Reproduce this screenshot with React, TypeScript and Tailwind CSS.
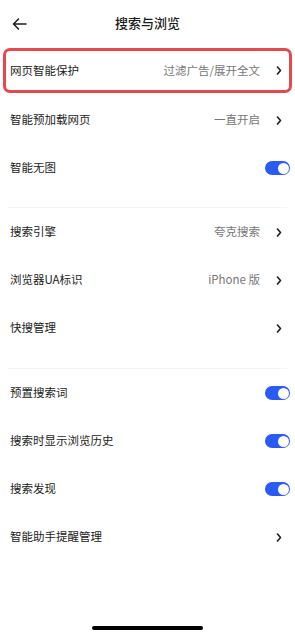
import React from "react";

const font = { fontFamily: '"Noto Sans CJK SC", "Noto Sans", sans-serif' };

function Chevron() {
  return (
    <svg width="6" height="9" viewBox="0 0 6 9" fill="none" className="shrink-0">
      <path d="M1.5 1 L4.5 4.5 L1.5 8" stroke="#1c1c1c" strokeWidth="1.6" strokeLinecap="round" strokeLinejoin="round" />
    </svg>
  );
}

function Toggle() {
  return (
    <div className="w-[25px] h-[14px] rounded-full bg-[#2a5bf5] flex items-center justify-end pr-[1.5px] -mr-[8px]">
      <div className="w-[11px] h-[11px] rounded-full bg-white" />
    </div>
  );
}

function Row({ label, value, toggle }: { label: string; value?: string; toggle?: boolean }) {
  return (
    <div className="h-12 flex items-center justify-between pl-[10px] pr-[13px]">
      <span className="text-[11.5px] text-[#1c1c1c]">{label}</span>
      {toggle ? (
        <Toggle />
      ) : (
        <div className="flex items-center gap-[16px]">
          {value && <span className="text-[11.5px] text-[#777]">{value}</span>}
          <Chevron />
        </div>
      )}
    </div>
  );
}

export default function App() {
  return (
    <div className="w-full h-[639px] bg-white flex flex-col overflow-hidden" style={font}>
      {/* Header */}
      <div className="h-[48px] grid grid-cols-[48px_1fr_48px] items-center">
        <div className="pl-[12px]">
          <svg width="15" height="12" viewBox="0 0 15 12" fill="none">
            <path d="M14 6 H1.5 M6.5 1 L1.5 6 L6.5 11" stroke="#1c1c1c" strokeWidth="1.5" strokeLinecap="round" strokeLinejoin="round" />
          </svg>
        </div>
        <div className="text-center text-[13px] font-medium text-[#1c1c1c] -mt-[3px]">搜索与浏览</div>
        <div />
      </div>

      {/* Highlighted row */}
      <div className="mx-[3px] h-[45px] border-[3px] border-[#e5484d] rounded-[7px] flex items-center justify-between pl-[4px] pr-[7px]">
        <span className="text-[11.5px] text-[#1c1c1c]">网页智能保护</span>
        <div className="flex items-center gap-[16px]">
          <span className="text-[11.5px] text-[#777]">过滤广告/展开全文</span>
          <Chevron />
        </div>
      </div>
      <div className="mt-[3px]">
        <Row label="智能预加载网页" value="一直开启" />
        <Row label="智能无图" toggle />
      </div>

      <div className="mt-[15px] mx-[8px] h-px bg-[#f3f3f3]" />
      <Row label="搜索引擎" value="夸克搜索" />
      <Row label="浏览器UA标识" value="iPhone 版" />
      <Row label="快搜管理" />

      <div className="mt-[16px] mx-[8px] h-px bg-[#f3f3f3]" />
      <Row label="预置搜索词" toggle />
      <Row label="搜索时显示浏览历史" toggle />
      <Row label="搜索发现" toggle />
      <Row label="智能助手提醒管理" />

      <div className="mt-auto mb-[9px] mx-auto w-[111px] h-[4px] rounded-full bg-black" />
    </div>
  );
}
